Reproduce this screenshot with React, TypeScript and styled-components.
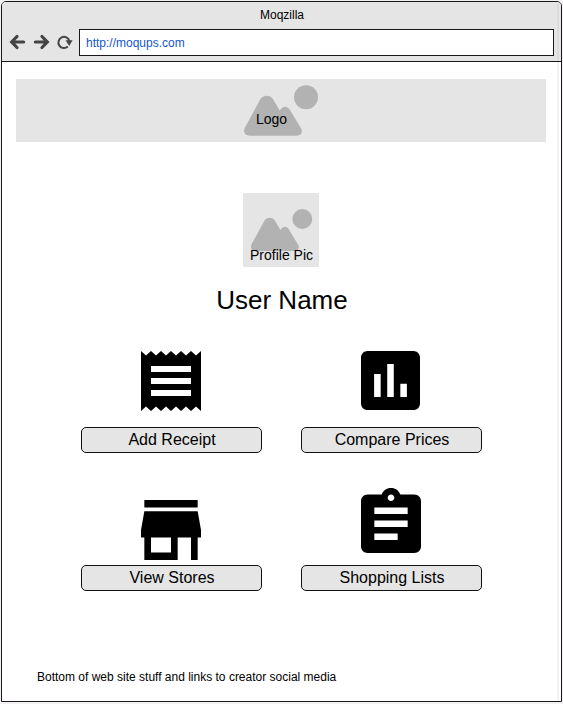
import React from "react";
import styled, { createGlobalStyle } from "styled-components";

const GlobalStyle = createGlobalStyle`
  * { box-sizing: border-box; }
  body {
    margin: 0;
    background: #f3f1f3;
    color: #000;
    font-family: "Liberation Sans", Arial, sans-serif;
  }
`;

const BrowserWindow = styled.div`
  display: flex;
  flex-direction: column;
  width: 561px;
  height: 701px;
  margin: 1px;
  overflow: hidden;
  border: 1px solid #19171a;
  border-radius: 5px 5px 0 0;
  background: #fff;
`;

const Chrome = styled.header`
  height: 60px;
  flex: none;
  border-bottom: 1px solid #19171a;
  background: linear-gradient(to right, transparent 555px, #dcdcdc 555px, #dcdcdc 557px, transparent 557px) #e5e5e5;
`;

const TitleBar = styled.div`
  height: 27px;
  padding-left: 1px;
  line-height: 27px;
  text-align: center;
  font-size: 12px;
`;

const Toolbar = styled.div`
  display: flex;
  align-items: center;
  height: 27px;
  padding: 0 7px 0 6px;
`;

const NavIcons = styled.svg`
  display: block;
  flex: none;
  width: 71px;
  height: 27px;
  fill: none;
  stroke: #444;
  stroke-width: 3.2;
  stroke-linecap: round;
  stroke-linejoin: miter;
`;

const AddressField = styled.div`
  flex: 1;
  height: 27px;
  padding-left: 6px;
  border: 1px solid #19171a;
  background: #fff;
  color: #1556cf;
  font-size: 12px;
  line-height: 26px;
`;

const Page = styled.main`
  display: flex;
  flex: 1;
  flex-direction: column;
  align-items: center;
  padding: 17px 0 0;
  background: linear-gradient(to right, transparent 555px, #f2f2f2 555px, #f2f2f2 557px, transparent 557px) #fff;
`;

const Placeholder = styled.div<{ $width: number; $height: number }>`
  display: grid;
  flex: none;
  width: ${(p) => p.$width}px;
  height: ${(p) => p.$height}px;
  background: #e5e5e5;
  > * { grid-area: 1 / 1; }
`;

const Banner = styled(Placeholder)`
  align-self: flex-start;
  margin-left: 14px;
`;

const Avatar = styled(Placeholder)`
  align-self: flex-start;
  margin: 51px 0 0 241px;
`;

const Mountains = styled.svg<{ $scale: number; $left: number; $top: number }>`
  display: block;
  width: ${(p) => 76 * p.$scale}px;
  height: ${(p) => 53 * p.$scale}px;
  margin: ${(p) => p.$top}px 0 0 ${(p) => p.$left}px;
  fill: #b2b2b2;
`;

const Caption = styled.span<{ $left: number; $top: number }>`
  margin: ${(p) => p.$top}px 0 0 ${(p) => p.$left}px;
  font-size: 14px;
  line-height: 16px;
  white-space: nowrap;
`;

const UserName = styled.h1`
  margin: 17px 0 0 1px;
  font-size: 26px;
  font-weight: 400;
  line-height: 32px;
`;

const Actions = styled.nav`
  display: grid;
  grid-template-columns: 181px 181px;
  grid-template-rows: 102px 103px;
  gap: 35px 39px;
  align-self: flex-start;
  margin: 35px 0 0 79px;
`;

const Action = styled.div`
  display: flex;
  flex-direction: column;
  justify-content: flex-end;
`;

const ActionIcon = styled.svg<{ $width: number; $height: number; $gap: number }>`
  display: block;
  flex: none;
  width: ${(p) => p.$width}px;
  height: ${(p) => p.$height}px;
  margin: 0 0 ${(p) => p.$gap}px 60px;
`;

const ActionButton = styled.button`
  flex: none;
  width: 181px;
  height: 26px;
  padding: 0 0 0 1px;
  border: 1px solid #111;
  border-radius: 5px;
  background: #e5e5e5;
  color: #000;
  font: 16px/24px "Liberation Sans", Arial, sans-serif;
`;

const Footer = styled.footer`
  align-self: flex-start;
  margin: 78px 0 0 35px;
  font-size: 12px;
  line-height: 16px;
`;

const PlaceholderArt = ({ scale, left, top }: { scale: number; left: number; top: number }) => (
  <Mountains $scale={scale} $left={left} $top={top} viewBox="0 0 76 53">
    <circle cx="63" cy="13.2" r="12" />
    <path d="M2 43.500 17.300 15.300C20 10.500 27.200 10.500 30 15L36.700 26.500C39.500 21.700 44 21.500 46.500 25.200L57.900 44C60.500 48.500 57.800 51.700 53.500 51.700H7.500C1.800 51.700-.3 48.300 2 43.500Z" />
  </Mountains>
);

const actions = [
  {
    label: "Add Receipt", width: 60, height: 60, gap: 16, viewBox: "3 2 18 20",
    path: "M18 17H6v-2h12v2zm0-4H6v-2h12v2zm0-4H6V7h12v2zM3 22l1.500-1.500L6 22l1.500-1.500L9 22l1.500-1.500L12 22l1.500-1.500L15 22l1.500-1.500L18 22l1.500-1.500L21 22V2l-1.500 1.500L18 2l-1.500 1.500L15 2l-1.500 1.500L12 2l-1.500 1.500L9 2 7.500 3.500 6 2 4.500 3.500 3 2v20z",
  },
  {
    label: "Compare Prices", width: 59, height: 59, gap: 17, viewBox: "3 3 18 18",
    path: "M19 3H5c-1.100 0-2 .9-2 2v14c0 1.100.9 2 2 2h14c1.100 0 2-.9 2-2V5c0-1.100-.9-2-2-2zM9 17H7v-7h2v7zm4 0h-2V7h2v10zm4 0h-2v-4h2v4z",
  },
  {
    label: "View Stores", width: 60, height: 60, gap: 5, viewBox: "3 4 18 16",
    path: "M20 4H4v2h16V4zm1 10v-2l-1-5H4l-1 5v2h1v6h10v-6h4v6h2v-6h1zm-9 4H6v-4h6v4z",
  },
  {
    label: "Shopping Lists", width: 60, height: 65, gap: 12, viewBox: "3 1 18 20",
    path: "M19 3h-4.180C14.400 1.840 13.300 1 12 1s-2.400.84-2.820 2H5c-1.100 0-2 .9-2 2v14c0 1.100.9 2 2 2h14c1.100 0 2-.9 2-2V5c0-1.100-.9-2-2-2zm-7 0c.55 0 1 .45 1 1s-.45 1-1 1-1-.45-1-1 .45-1 1-1zm2 14H7v-2h7v2zm3-4H7v-2h10v2zm0-4H7V7h10v2z",
  },
];

export default function App() {
  return (
    <>
      <GlobalStyle />
      <BrowserWindow>
        <Chrome>
          <TitleBar>Moqzilla</TitleBar>
          <Toolbar>
            <NavIcons viewBox="8 29 71 27">
              <path d="M23.600 42H12M17 36.500 11.700 42 17 47.500M35.400 42H47M42 36.500 47.300 42 42 47.500" />
              <path d="M67.800 46.600A5.600 5.600 0 1 1 69.400 41" strokeWidth="2" strokeLinecap="butt" />
              <path d="M65.600 40.300H72.600L69.200 46Z" fill="#444" stroke="none" />
            </NavIcons>
            <AddressField>http://moqups.com</AddressField>
          </Toolbar>
        </Chrome>
        <Page>
          <Banner $width={530} $height={63}>
            <PlaceholderArt scale={1} left={227} top={5} />
            <Caption $left={240} $top={32}>Logo</Caption>
          </Banner>
          <Avatar $width={76} $height={74}>
            <PlaceholderArt scale={0.83} left={6.5} top={15} />
            <Caption $left={7} $top={54}>Profile Pic</Caption>
          </Avatar>
          <UserName>User Name</UserName>
          <Actions>
            {actions.map((a) => (
              <Action key={a.label}>
                <ActionIcon $width={a.width} $height={a.height} $gap={a.gap} viewBox={a.viewBox} preserveAspectRatio="none">
                  <path d={a.path} />
                </ActionIcon>
                <ActionButton>{a.label}</ActionButton>
              </Action>
            ))}
          </Actions>
          <Footer>Bottom of web site stuff and links to creator social media</Footer>
        </Page>
      </BrowserWindow>
    </>
  );
}
